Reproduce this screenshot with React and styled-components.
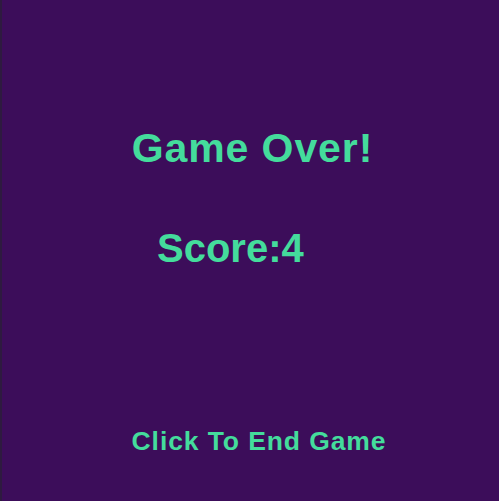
import styled, { createGlobalStyle } from "styled-components"

const GlobalStyle = createGlobalStyle`
    html, body {
        margin: 0;
        padding: 0;
        background-color: #3c0d5a;
    }
`;

const Screen = styled.div`
    width: 499px;
    height: 501px;
    background-color: #3c0d5a;
    border-left: 2px solid #2e1a40;
    box-sizing: border-box;
    display: flex;
    flex-direction: column;
    align-items: center;
    font-family: "Liberation Sans", Arial, sans-serif;
    font-weight: bold;
    color: #44dc9c;
`;

const Title = styled.h1`
    margin: 124px 0 0 4px;
    font-size: 41px;
    letter-spacing: 0.9px;
    line-height: 48px;
    font-weight: bold;
`;

const ScoreRow = styled.div`
    align-self: flex-start;
    margin: 52px 0 0 155px;
    font-size: 40px;
    line-height: 48px;
`;

const EndButton = styled.button`
    margin-top: 153px;
    margin-left: 17px;
    background: none;
    border: none;
    padding: 0;
    cursor: pointer;
    font-family: inherit;
    font-weight: bold;
    color: inherit;
    font-size: 26.5px;
    letter-spacing: 0.9px;
    line-height: 32px;
`;

export default function App() {
  const score = 4;
  return (
    <>
      <GlobalStyle />
      <Screen>
        <Title>Game Over!</Title>
        <ScoreRow>Score:{score}</ScoreRow>
        <EndButton>Click To End Game</EndButton>
      </Screen>
    </>
  )
}
